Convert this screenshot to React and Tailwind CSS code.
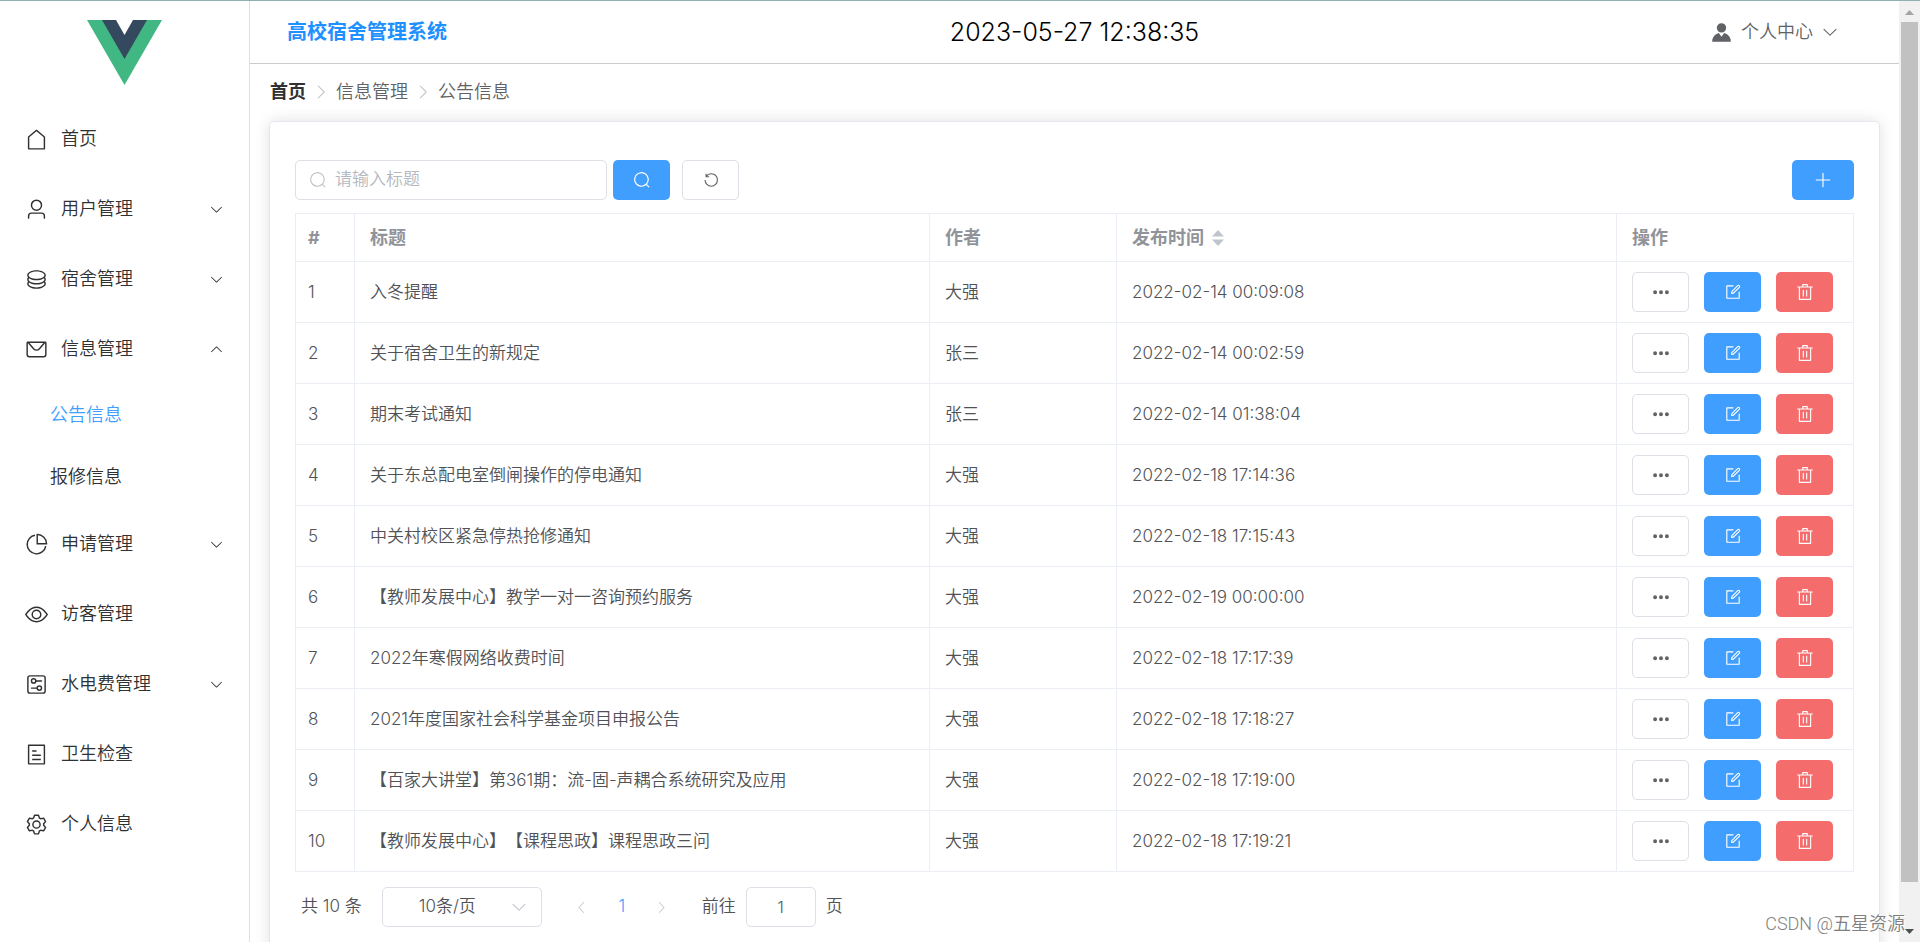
import React from 'react'

const ICONS = {
  house: [
    'M192 413.952V896h640V413.952L512 147.328 192 413.952zM139.52 374.4l352-293.312a32 32 0 0 1 40.96 0l352 293.312A32 32 0 0 1 896 398.976V928a32 32 0 0 1-32 32H160a32 32 0 0 1-32-32V398.976a32 32 0 0 1 11.52-24.576z',
  ],
  user: [
    'M512 512a192 192 0 1 0 0-384 192 192 0 0 0 0 384zm0 64a256 256 0 1 1 0-512 256 256 0 0 1 0 512zm320 320v-96a96 96 0 0 0-96-96H288a96 96 0 0 0-96 96v96a32 32 0 1 1-64 0v-96a160 160 0 0 1 160-160h448a160 160 0 0 1 160 160v96a32 32 0 1 1-64 0z',
  ],
  coin: [
    'm161.92 580.736 29.888 58.88C171.328 659.776 160 681.728 160 704c0 82.304 155.328 160 352 160s352-77.696 352-160c0-22.272-11.392-44.16-31.808-64.32l30.464-58.432C903.936 615.808 928 657.664 928 704c0 129.728-188.544 224-416 224S96 833.728 96 704c0-46.592 24.32-88.576 65.92-123.264z',
    'm161.92 388.736 29.888 58.88C171.328 467.84 160 489.792 160 512c0 82.304 155.328 160 352 160s352-77.696 352-160c0-22.272-11.392-44.16-31.808-64.32l30.464-58.432C903.936 423.808 928 465.664 928 512c0 129.728-188.544 224-416 224S96 641.728 96 512c0-46.592 24.32-88.576 65.92-123.264z',
    'M512 544c-227.456 0-416-94.272-416-224S284.544 96 512 96s416 94.272 416 224-188.544 224-416 224zm0-64c196.672 0 352-77.696 352-160S708.672 160 512 160s-352 77.696-352 160 155.328 160 352 160z',
  ],
  message: [
    'M128 224v512a64 64 0 0 0 64 64h640a64 64 0 0 0 64-64V224H128zm0-64h768a64 64 0 0 1 64 64v512a128 128 0 0 1-128 128H192A128 128 0 0 1 64 736V224a64 64 0 0 1 64-64z',
    'M904 224 656.512 506.88a192 192 0 0 1-289.024 0L120 224h784zm-698.944 0 210.56 240.704a128 128 0 0 0 192.704 0L818.944 224H205.056z',
  ],
  pie: [
    'M448 68.48v64.832A384.128 384.128 0 0 0 512 896a384.128 384.128 0 0 0 378.688-320h64.768A448.128 448.128 0 0 1 64 512 448.128 448.128 0 0 1 448 68.48z',
    'M576 97.28V448h350.72A384.064 384.064 0 0 0 576 97.28zM512 64V33.152A448 448 0 0 1 990.848 512H512V64z',
  ],
  view: [
    'M512 160c320 0 512 352 512 352S832 864 512 864 0 512 0 512s192-352 512-352zm0 64c-225.28 0-384.128 208.064-436.8 288 52.608 79.872 211.456 288 436.8 288 225.28 0 384.128-208.064 436.8-288-52.608-79.872-211.456-288-436.8-288zm0 64a224 224 0 1 1 0 448 224 224 0 0 1 0-448zm0 64a160.192 160.192 0 0 0-160 160c0 88.192 71.744 160 160 160s160-71.808 160-160-71.744-160-160-160z',
  ],
  setup: [
    'M224 160a64 64 0 0 0-64 64v576a64 64 0 0 0 64 64h576a64 64 0 0 0 64-64V224a64 64 0 0 0-64-64H224zm0-64h576a128 128 0 0 1 128 128v576a128 128 0 0 1-128 128H224A128 128 0 0 1 96 800V224A128 128 0 0 1 224 96z',
    'M384 416a64 64 0 1 0 0-128 64 64 0 0 0 0 128zm0 64a128 128 0 1 1 0-256 128 128 0 0 1 0 256z',
    'M480 320h256q32 0 32 32t-32 32H480q-32 0-32-32t32-32zm160 416a64 64 0 1 0 0-128 64 64 0 0 0 0 128zm0 64a128 128 0 1 1 0-256 128 128 0 0 1 0 256z',
    'M288 640h256q32 0 32 32t-32 32H288q-32 0-32-32t32-32z',
  ],
  tickets: [
    'M192 128v768h640V128H192zm-32-64h704a32 32 0 0 1 32 32v832a32 32 0 0 1-32 32H160a32 32 0 0 1-32-32V96a32 32 0 0 1 32-32zm160 448h384v64H320v-64zm0-192h192v64H320v-64zm0 384h384v64H320v-64z',
  ],
  setting: [
    'M600.704 64a32 32 0 0 1 30.464 22.208l35.2 109.376c14.784 7.232 28.928 15.36 42.432 24.512l112.384-24.192a32 32 0 0 1 34.432 15.36L944.32 364.8a32 32 0 0 1-4.032 37.504l-77.12 85.12a357.12 357.12 0 0 1 0 49.024l77.12 85.248a32 32 0 0 1 4.032 37.504l-88.704 153.6a32 32 0 0 1-34.432 15.296L708.8 803.904c-13.44 9.088-27.648 17.28-42.368 24.512l-35.264 109.376A32 32 0 0 1 600.704 960H423.296a32 32 0 0 1-30.464-22.208L357.696 828.48a351.616 351.616 0 0 1-42.56-24.64l-112.32 24.256a32 32 0 0 1-34.432-15.36L79.68 659.2a32 32 0 0 1 4.032-37.504l77.12-85.248a357.12 357.12 0 0 1 0-48.896l-77.12-85.248A32 32 0 0 1 79.68 364.8l88.704-153.6a32 32 0 0 1 34.432-15.296l112.32 24.256c13.568-9.152 27.776-17.408 42.56-24.64l35.2-109.312A32 32 0 0 1 423.232 64H600.64zm-23.424 64H446.72l-36.352 113.088-24.512 11.968a294.113 294.113 0 0 0-34.816 20.096l-22.656 15.36-116.224-25.088-65.28 113.152 79.68 88.192-1.92 27.136a293.12 293.12 0 0 0 0 40.192l1.92 27.136-79.808 88.192 65.344 113.152 116.224-25.024 22.656 15.296a294.113 294.113 0 0 0 34.816 20.096l24.512 11.968L446.72 896h130.688l36.48-113.152 24.448-11.904a288.282 288.282 0 0 0 34.752-20.096l22.592-15.296 116.288 25.024 65.28-113.152-79.744-88.192 1.92-27.136a293.12 293.12 0 0 0 0-40.256l-1.92-27.136 79.808-88.128-65.344-113.152-116.288 24.96-22.592-15.232a287.616 287.616 0 0 0-34.752-20.096l-24.448-11.904L577.344 128zM512 320a192 192 0 1 1 0 384 192 192 0 0 1 0-384zm0 64a128 128 0 1 0 0 256 128 128 0 0 0 0-256z',
  ],
  down: [
    'M831.872 340.864 512 652.672 192.128 340.864a30.592 30.592 0 0 0-42.752 0 29.12 29.12 0 0 0 0 41.6L489.664 714.24a32 32 0 0 0 44.672 0l340.288-331.712a29.12 29.12 0 0 0 0-41.728 30.592 30.592 0 0 0-42.752 0z',
  ],
  right: [
    'M340.864 149.312a30.592 30.592 0 0 0 0 42.752L652.736 512 340.864 831.872a30.592 30.592 0 0 0 0 42.752 29.12 29.12 0 0 0 41.728 0L714.24 534.336a32 32 0 0 0 0-44.672L382.592 149.376a29.12 29.12 0 0 0-41.728 0z',
  ],
  search: [
    'm795.904 750.72 124.992 124.928a32 32 0 0 1-45.248 45.248L750.656 795.904a416 416 0 1 1 45.248-45.248zM480 832a352 352 0 1 0 0-704 352 352 0 0 0 0 704z',
  ],
  refresh: [
    'M289.088 296.704h92.992a32 32 0 0 1 0 64H232.96a32 32 0 0 1-32-32V179.712a32 32 0 0 1 64 0v50.56a384 384 0 0 1 643.84 282.88 384 384 0 0 1-383.936 384 384 384 0 0 1-384-384h64a320 320 0 1 0 640 0 320 320 0 0 0-555.712-216.448z',
  ],
  plus: [
    'M480 480V128a32 32 0 0 1 64 0v352h352a32 32 0 1 1 0 64H544v352a32 32 0 1 1-64 0V544H128a32 32 0 0 1 0-64h352z',
  ],
  more: [
    'M176 416a112 112 0 1 1 0 224 112 112 0 0 1 0-224zm336 0a112 112 0 1 1 0 224 112 112 0 0 1 0-224zm336 0a112 112 0 1 1 0 224 112 112 0 0 1 0-224z',
  ],
  edit: [
    'M832 512a32 32 0 1 1 64 0v352a32 32 0 0 1-32 32H160a32 32 0 0 1-32-32V160a32 32 0 0 1 32-32h352a32 32 0 0 1 0 64H192v640h640V512z',
    'm469.952 554.24 52.8-7.552L847.104 222.4a32 32 0 1 0-45.248-45.248L477.44 501.44l-7.552 52.8zm422.4-422.4a96 96 0 0 1 0 135.808l-331.84 331.84a32 32 0 0 1-18.112 9.088L436.8 623.68a32 32 0 0 1-36.224-36.224l15.104-105.6a32 32 0 0 1 9.024-18.112l331.904-331.84a96 96 0 0 1 135.744 0z',
  ],
  trash: [
    'M160 256H96a32 32 0 0 1 0-64h256V95.936a32 32 0 0 1 32-32h256a32 32 0 0 1 32 32V192h256a32 32 0 1 1 0 64h-64v672a32 32 0 0 1-32 32H192a32 32 0 0 1-32-32V256zm448-64v-64H416v64h192zM224 896h576V256H224v640zm192-128a32 32 0 0 1-32-32V416a32 32 0 0 1 64 0v320a32 32 0 0 1-32 32zm192 0a32 32 0 0 1-32-32V416a32 32 0 0 1 64 0v320a32 32 0 0 1-32 32z',
  ],
  avatar: [
    'M628.736 528.896A416 416 0 0 1 928 928H96a415.872 415.872 0 0 1 299.264-399.104L512 704l116.736-175.104zM720 304a208 208 0 1 1-416 0 208 208 0 0 1 416 0z',
  ],
}

function Icon({ name, className = 'size-[18px]' }) {
  return (
    <svg viewBox="0 0 1024 1024" fill="currentColor" aria-hidden="true" className={`shrink-0 ${className}`}>
      {ICONS[name].map((d) => (
        <path key={d} d={d} />
      ))}
    </svg>
  )
}

const menu = [
  { icon: 'house', label: '首页' },
  { icon: 'user', label: '用户管理', sub: [] },
  { icon: 'coin', label: '宿舍管理', sub: [] },
  { icon: 'message', label: '信息管理', open: true, sub: ['公告信息', '报修信息'] },
  { icon: 'pie', label: '申请管理', sub: [] },
  { icon: 'view', label: '访客管理' },
  { icon: 'setup', label: '水电费管理', sub: [] },
  { icon: 'tickets', label: '卫生检查' },
  { icon: 'setting', label: '个人信息' },
]

const rows = [
  ['入冬提醒', '大强', '2022-02-14 00:09:08'],
  ['关于宿舍卫生的新规定', '张三', '2022-02-14 00:02:59'],
  ['期末考试通知', '张三', '2022-02-14 01:38:04'],
  ['关于东总配电室倒闸操作的停电通知', '大强', '2022-02-18 17:14:36'],
  ['中关村校区紧急停热抢修通知', '大强', '2022-02-18 17:15:43'],
  ['【教师发展中心】教学一对一咨询预约服务', '大强', '2022-02-19 00:00:00'],
  ['2022年寒假网络收费时间', '大强', '2022-02-18 17:17:39'],
  ['2021年度国家社会科学基金项目申报公告', '大强', '2022-02-18 17:18:27'],
  ['【百家大讲堂】第361期：流-固-声耦合系统研究及应用', '大强', '2022-02-18 17:19:00'],
  ['【教师发展中心】【课程思政】课程思政三问', '大强', '2022-02-18 17:19:21'],
]

const buttonStyles = {
  plain: 'border border-[#dcdfe6] bg-white text-[#606266]',
  primary: 'bg-[#409eff] text-white',
  danger: 'bg-[#f56c6c] text-white',
}

function IconButton({ icon, label, kind = 'plain', width = 'w-[57px]' }) {
  return (
    <button
      type="button"
      aria-label={label}
      className={`flex h-10 items-center justify-center rounded-[5px] ${width} ${buttonStyles[kind]}`}
    >
      <Icon name={icon} />
    </button>
  )
}

function Sidebar() {
  return (
    <aside className="w-[250px] shrink-0 border-r border-[#dcdfe6] pt-[19px]">
      <svg viewBox="0 0 75 65" className="mx-auto h-[65px] w-[75px]" aria-hidden="true">
        <path d="M0 0h75L37.500 65z" fill="#41b883" />
        <path d="M15 0h45L37.500 39z" fill="#35495e" />
        <path d="M29 0h17L37.500 15z" fill="#fff" />
      </svg>
      <nav className="mt-[19px] text-lg text-[#303133]">
        {menu.map((item) => (
          <div key={item.label}>
            <a href="#" className="flex h-[70px] items-center pr-[25px] pl-[25px]">
              <Icon name={item.icon} className="size-[23px]" />
              <span className="ml-[13px] grow">{item.label}</span>
              {item.sub && <Icon name="down" className={item.open ? 'size-[15px] rotate-180' : 'size-[15px]'} />}
            </a>
            {item.open && (
              <div className="pb-px">
                {item.sub.map((name, i) => (
                  <a
                    key={name}
                    href="#"
                    className={`flex h-[62px] items-center pl-[50px] ${i === 0 ? 'text-[#409eff]' : ''}`}
                  >
                    {name}
                  </a>
                ))}
              </div>
            )}
          </div>
        ))}
      </nav>
    </aside>
  )
}

function Header() {
  return (
    <header className="grid h-[63px] shrink-0 grid-cols-3 items-center border-b border-[#ccc]">
      <h1 className="pl-[37px] text-xl font-bold text-[#1e90ff]">高校宿舍管理系统</h1>
      <time className="text-center text-[25px] leading-8 text-black">2023-05-27 12:38:35</time>
      <button type="button" className="mr-[60px] flex items-center justify-self-end text-lg text-[#606266]">
        <Icon name="avatar" className="size-[23px]" />
        <span className="ml-2">个人中心</span>
        <Icon name="down" className="ml-2 size-[18px]" />
      </button>
    </header>
  )
}

function Breadcrumb() {
  return (
    <nav className="flex items-center gap-[6px] pl-px text-lg leading-[25px] text-[#606266]">
      <a href="#" className="font-bold text-[#303133]">
        首页
      </a>
      <Icon name="right" className="size-[18px] text-[#c0c4cc]" />
      <span>信息管理</span>
      <Icon name="right" className="size-[18px] text-[#c0c4cc]" />
      <span>公告信息</span>
    </nav>
  )
}

function Toolbar() {
  return (
    <div className="flex items-center">
      <label className="flex h-10 w-[312px] items-center rounded-[5px] border border-[#dcdfe6] px-[13px] text-[#c0c4cc]">
        <Icon name="search" />
        <input
          type="text"
          aria-label="标题"
          placeholder="请输入标题"
          className="ml-2 min-w-0 grow text-[17px] text-[#606266] outline-none placeholder:text-[#b4b8c0]"
        />
      </label>
      <div className="ml-[6px] flex gap-3">
        <IconButton icon="search" label="搜索" kind="primary" />
        <IconButton icon="refresh" label="重置" />
      </div>
      <div className="ml-auto">
        <IconButton icon="plus" label="新增" kind="primary" width="w-[62px]" />
      </div>
    </div>
  )
}

function NoticeTable() {
  const cell = 'border-r border-b border-[#ebeef5] px-[15px]'
  return (
    <table className="mt-[13px] w-full table-fixed border-separate border-spacing-0 border-t border-l border-[#ebeef5] text-left text-[17px] text-[#505256]">
      <colgroup>
        <col className="w-[59px]" />
        <col />
        <col className="w-[187px]" />
        <col className="w-[500px]" />
        <col className="w-[237px]" />
      </colgroup>
      <thead className="text-lg text-[#909399]">
        <tr className="h-[48px]">
          <th className="border-r border-b border-[#ebeef5] pl-3">#</th>
          <th className={cell}>标题</th>
          <th className={cell}>作者</th>
          <th className={cell}>
            <div className="flex items-center gap-2">
              发布时间
              <svg viewBox="0 0 12 16" className="h-4 w-3" fill="#c0c4cc" aria-hidden="true">
                <path d="M6 0l6 6.500H0zM6 16l6-6.500H0z" />
              </svg>
            </div>
          </th>
          <th className={cell}>操作</th>
        </tr>
      </thead>
      <tbody>
        {rows.map(([title, author, time], i) => (
          <tr key={title} className="h-[61px]">
            <td className="border-r border-b border-[#ebeef5] pt-px pl-3">{i + 1}</td>
            <td className={`${cell} pt-px [text-spacing-trim:space-all]`}>{title}</td>
            <td className={`${cell} pt-px`}>{author}</td>
            <td className={`${cell} pt-px`}>{time}</td>
            <td className={cell}>
              <div className="flex gap-[15px]">
                <IconButton icon="more" label="详情" />
                <IconButton icon="edit" label="编辑" kind="primary" />
                <IconButton icon="trash" label="删除" kind="danger" />
              </div>
            </td>
          </tr>
        ))}
      </tbody>
    </table>
  )
}

function Pagination() {
  return (
    <div className="mt-[15px] flex items-center pl-[6px] text-[17px] text-[#505256]">
      <span>共 10 条</span>
      <div className="relative ml-5">
        <select
          aria-label="每页条数"
          className="h-10 w-[160px] appearance-none rounded-[5px] border border-[#dcdfe6] pl-9 outline-none"
        >
          <option>10条/页</option>
        </select>
        <Icon name="down" className="pointer-events-none absolute top-[11px] right-[14px] size-[18px] text-[#c0c4cc]" />
      </div>
      <button type="button" aria-label="上一页" className="ml-5 flex w-10 justify-center text-[#c0c4cc]">
        <Icon name="right" className="size-[15px] rotate-180" />
      </button>
      <button type="button" className="w-10 text-[#409eff]">
        1
      </button>
      <button type="button" aria-label="下一页" className="flex w-10 justify-center text-[#c0c4cc]">
        <Icon name="right" className="size-[15px]" />
      </button>
      <label className="ml-5 flex items-center gap-[10px]">
        前往
        <input
          type="text"
          defaultValue="1"
          className="h-10 w-[70px] rounded-[5px] border border-[#dcdfe6] text-center text-base outline-none"
        />
        页
      </label>
    </div>
  )
}

function Scrollbar() {
  return (
    <div className="flex w-[21px] shrink-0 flex-col items-center bg-[#f1f1f1]" aria-hidden="true">
      <svg viewBox="0 0 21 21" className="size-[21px]">
        <path d="M6 14l4.500-5L15 14z" fill="#a3a3a3" />
      </svg>
      <div className="w-[17px] grow bg-[#c1c1c1]" />
      <div className="h-[39px]" />
      <svg viewBox="0 0 21 21" className="size-[21px]">
        <path d="M6 8l4.500 5L15 8z" fill="#505050" />
      </svg>
    </div>
  )
}

export default function App() {
  return (
    <div className="relative flex h-screen overflow-hidden border-t border-[#8fb0b3] bg-white font-[Inter,'Noto_Sans_CJK_SC',sans-serif] font-[350]">
      <Sidebar />
      <div className="flex min-w-0 grow flex-col">
        <Header />
        <main className="grow px-[19px] pt-[15px]">
          <Breadcrumb />
          <section className="mt-[17px] rounded-[5px] border border-[#e4e7ed] px-[25px] pt-[38px] pb-[38px] shadow-[0_0_15px_rgba(0,0,0,0.12)]">
            <Toolbar />
            <NoticeTable />
            <Pagination />
          </section>
        </main>
      </div>
      <Scrollbar />
      <div className="absolute right-[15px] bottom-1 font-[Roboto,'Noto_Sans_CJK_SC',sans-serif] text-lg text-[#808080] [text-shadow:1px_1px_0_#fff]">
        CSDN @五星资源
      </div>
    </div>
  )
}
